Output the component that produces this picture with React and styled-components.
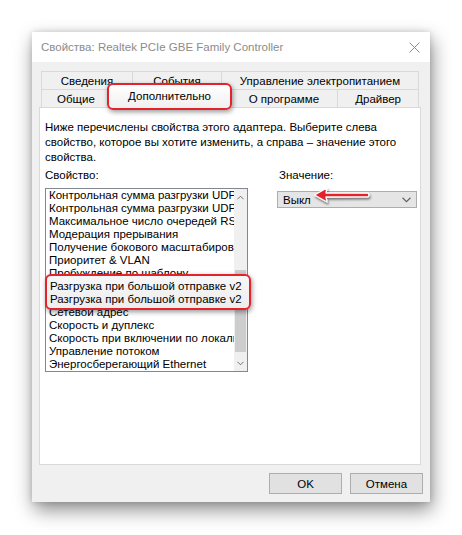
import styled, { createGlobalStyle } from 'styled-components';

const GlobalStyle = createGlobalStyle`
  html, body {
    margin: 0;
    padding: 0;
    background: #FFFFFF;
  }
  body {
    font-family: "Liberation Sans", Arial, sans-serif;
    font-size: 11.5px;
    color: #000000;
  }
`;

const Page = styled.div`
  padding: 32px 0 0 32px;
  height: 535px;
  box-sizing: border-box;
`;

const Dialog = styled.div`
  position: relative;
  width: 398px;
  height: 470px;
  background: #F0F0F0;
  box-shadow: 2px 8px 18px rgba(0, 0, 0, 0.45), 0 0 6px rgba(0, 0, 0, 0.15);
  display: flex;
  flex-direction: column;
`;

const TitleBar = styled.div`
  height: 30px;
  background: #FFFFFF;
  display: flex;
  align-items: center;
  justify-content: space-between;
  padding: 0 10px 0 9px;
  color: #8C8C8C;
  font-size: 11.5px;
`;

const Body = styled.div`
  flex: 1;
  display: flex;
  flex-direction: column;
  padding: 9px 9px 0 7px;
`;

const TabStrip = styled.div`
  position: relative;
  margin: 0 2px;
  display: flex;
  flex-direction: column;
`;

const TabRow = styled.div`
  display: flex;
  height: 18px;
`;

const Tab = styled.div`
  width: ${(p) => p.w}px;
  box-sizing: border-box;
  border: 1px solid #D9D9D9;
  border-bottom: none;
  margin-left: -1px;
  &:first-child {
    margin-left: 0;
  }
  display: flex;
  align-items: center;
  justify-content: center;
  line-height: 16px;
  background: #F0F0F0;
`;

const Panel = styled.div`
  height: 358px;
  box-sizing: border-box;
  background: #FFFFFF;
  border: 1px solid #D9D9D9;
  padding: 12px 10px 0 5px;
`;

const Intro = styled.p`
  margin: 0;
  line-height: 15px;
  width: 360px;
`;

const Columns = styled.div`
  display: flex;
  gap: 29px;
  margin-top: 3px;
`;

const Column = styled.div`
  display: flex;
  flex-direction: column;
`;

const Label = styled.div`
  line-height: 14px;
  margin-bottom: ${(p) => p.gap}px;
  padding-left: ${(p) => p.indent || 0}px;
`;

const ListWrap = styled.div`
  position: relative;
`;

const ListBox = styled.div`
  width: 203px;
  height: 184px;
  box-sizing: border-box;
  border: 1px solid #828790;
  display: flex;
  background: #FFFFFF;
`;

const Items = styled.div`
  flex: 1;
  overflow: hidden;
  padding-left: 3px;
`;

const Item = styled.div`
  line-height: 13px;
  white-space: nowrap;
`;

const ScrollBar = styled.div`
  width: 13px;
  background: #F0F0F0;
  display: flex;
  flex-direction: column;
  align-items: center;
`;

const ScrollArrow = styled.div`
  height: 16px;
  display: flex;
  align-items: center;
  justify-content: center;
`;

const Track = styled.div`
  flex: 1;
  width: 100%;
  display: flex;
  flex-direction: column;
  justify-content: flex-end;
`;

const Thumb = styled.div`
  height: 82px;
  margin: 0 1px 3px;
  background: #CDCDCD;
`;

const ListCallout = styled.div`
  position: absolute;
  left: 0;
  top: 86px;
  width: 206px;
  height: 36px;
  box-sizing: border-box;
  border: 2px solid #E3222B;
  border-radius: 6px;
  background: linear-gradient(#F7F7F7, #EDEDED);
  box-shadow: 1px 2px 5px rgba(0, 0, 0, 0.4);
  padding: 4px 0 0 3px;
  overflow: hidden;
`;

const CalloutText = styled.div`
  width: 194px;
  overflow: hidden;
`;

const ComboWrap = styled.div`
  position: relative;
`;

const Combo = styled.div`
  width: 140px;
  height: 17px;
  box-sizing: border-box;
  border: 1px solid #ADADAD;
  background: #E5E5E5;
  display: flex;
  align-items: center;
  justify-content: space-between;
  padding: 0 5px 0 5px;
`;

const Arrow = styled.svg`
  position: absolute;
  left: 36px;
  top: -6px;
  overflow: visible;
`;

const TabCallout = styled.div`
  position: absolute;
  left: 66px;
  top: 12px;
  width: 125px;
  height: 27px;
  box-sizing: border-box;
  border: 2px solid #E3222B;
  border-radius: 6px;
  background: linear-gradient(#FFFFFF, #F0F0F0);
  box-shadow: 1px 2px 5px rgba(0, 0, 0, 0.4);
  display: flex;
  justify-content: center;
  padding-top: 4px;
  line-height: 14px;
`;

const Footer = styled.div`
  flex: 1;
  display: flex;
  justify-content: flex-end;
  align-items: flex-start;
  gap: 8px;
  padding: 8px 0 0;
  margin-right: -2px;
`;

const Button = styled.button`
  width: 73px;
  height: 21px;
  box-sizing: border-box;
  border: 1px solid #ADADAD;
  background: #E1E1E1;
  font-family: "Liberation Sans", Arial, sans-serif;
  font-size: 11.5px;
  color: #000000;
  padding: 0;
`;

const Chevron = ({ up, size = 7, color = '#606060' }) => (
  <svg width={size} height={Math.ceil(size / 2) + 1} viewBox="0 0 8 5">
    <path
      d={up ? 'M0.5 4.5 L4 1 L7.5 4.5' : 'M0.5 0.5 L4 4 L7.5 0.5'}
      fill="none"
      stroke={color}
      strokeWidth="1"
    />
  </svg>
);

const properties = [
  'Контрольная сумма разгрузки UDP (IPv4)',
  'Контрольная сумма разгрузки UDP (IPv6)',
  'Максимальное число очередей RSS',
  'Модерация прерывания',
  'Получение бокового масштабирования',
  'Приоритет & VLAN',
  'Пробуждение по шаблону',
  'Разгрузка при большой отправке v2 (IPv4)',
  'Разгрузка при большой отправке v2 (IPv6)',
  'Сетевой адрес',
  'Скорость и дуплекс',
  'Скорость при включении по локальной сети',
  'Управление потоком',
  'Энергосберегающий Ethernet',
];

export default function App() {
  return (
    <Page>
      <GlobalStyle />
      <Dialog>
        <TitleBar>
          <span>Свойства: Realtek PCIe GBE Family Controller</span>
          <svg width="11" height="11" viewBox="0 0 11 11">
            <path d="M0.5 0.5 L10.5 10.5 M10.5 0.5 L0.5 10.5" stroke="#8C8C8C" strokeWidth="1" />
          </svg>
        </TitleBar>
        <Body>
          <TabStrip>
            <TabRow>
              <Tab w={92}>Сведения</Tab>
              <Tab w={90}>События</Tab>
              <Tab w={198}>Управление электропитанием</Tab>
            </TabRow>
            <TabRow>
              <Tab w={70}>Общие</Tab>
              <Tab w={121}>Дополнительно</Tab>
              <Tab w={109}>О программе</Tab>
              <Tab w={82}>Драйвер</Tab>
            </TabRow>
            <TabCallout>Дополнительно</TabCallout>
          </TabStrip>
          <Panel>
            <Intro>
              Ниже перечислены свойства этого адаптера. Выберите слева свойство, которое вы хотите
              изменить, а справа – значение этого свойства.
            </Intro>
            <Columns>
              <Column>
                <Label gap={6}>Свойство:</Label>
                <ListWrap>
                  <ListBox>
                    <Items>
                      {properties.map((p) => (
                        <Item key={p}>{p}</Item>
                      ))}
                    </Items>
                    <ScrollBar>
                      <ScrollArrow>
                        <Chevron up />
                      </ScrollArrow>
                      <Track>
                        <Thumb />
                      </Track>
                      <ScrollArrow>
                        <Chevron />
                      </ScrollArrow>
                    </ScrollBar>
                  </ListBox>
                  <ListCallout>
                    <CalloutText>
                      <Item>Разгрузка при большой отправке v2 (IPv4)</Item>
                      <Item>Разгрузка при большой отправке v2 (IPv6)</Item>
                    </CalloutText>
                  </ListCallout>
                </ListWrap>
              </Column>
              <Column>
                <Label gap={9} indent={2}>Значение:</Label>
                <ComboWrap>
                  <Combo>
                    <span>Выкл</span>
                    <Chevron size={9} />
                  </Combo>
                  <Arrow width="58" height="20" viewBox="0 0 58 20">
                    <defs>
                      <filter id="sh" x="-20%" y="-50%" width="140%" height="200%">
                        <feDropShadow dx="1" dy="2" stdDeviation="1.3" floodOpacity="0.5" />
                      </filter>
                    </defs>
                    <path
                      d="M1.5 10 L14 3 L13 8 L55 8.2 Q57 10 55 11.8 L13 12 L14 17 Z"
                      fill="#E3222B"
                      stroke="#FFFFFF"
                      strokeWidth="1.3"
                      strokeLinejoin="round"
                      filter="url(#sh)"
                    />
                  </Arrow>
                </ComboWrap>
              </Column>
            </Columns>
          </Panel>
          <Footer>
            <Button>OK</Button>
            <Button>Отмена</Button>
          </Footer>
        </Body>
      </Dialog>
    </Page>
  );
}
